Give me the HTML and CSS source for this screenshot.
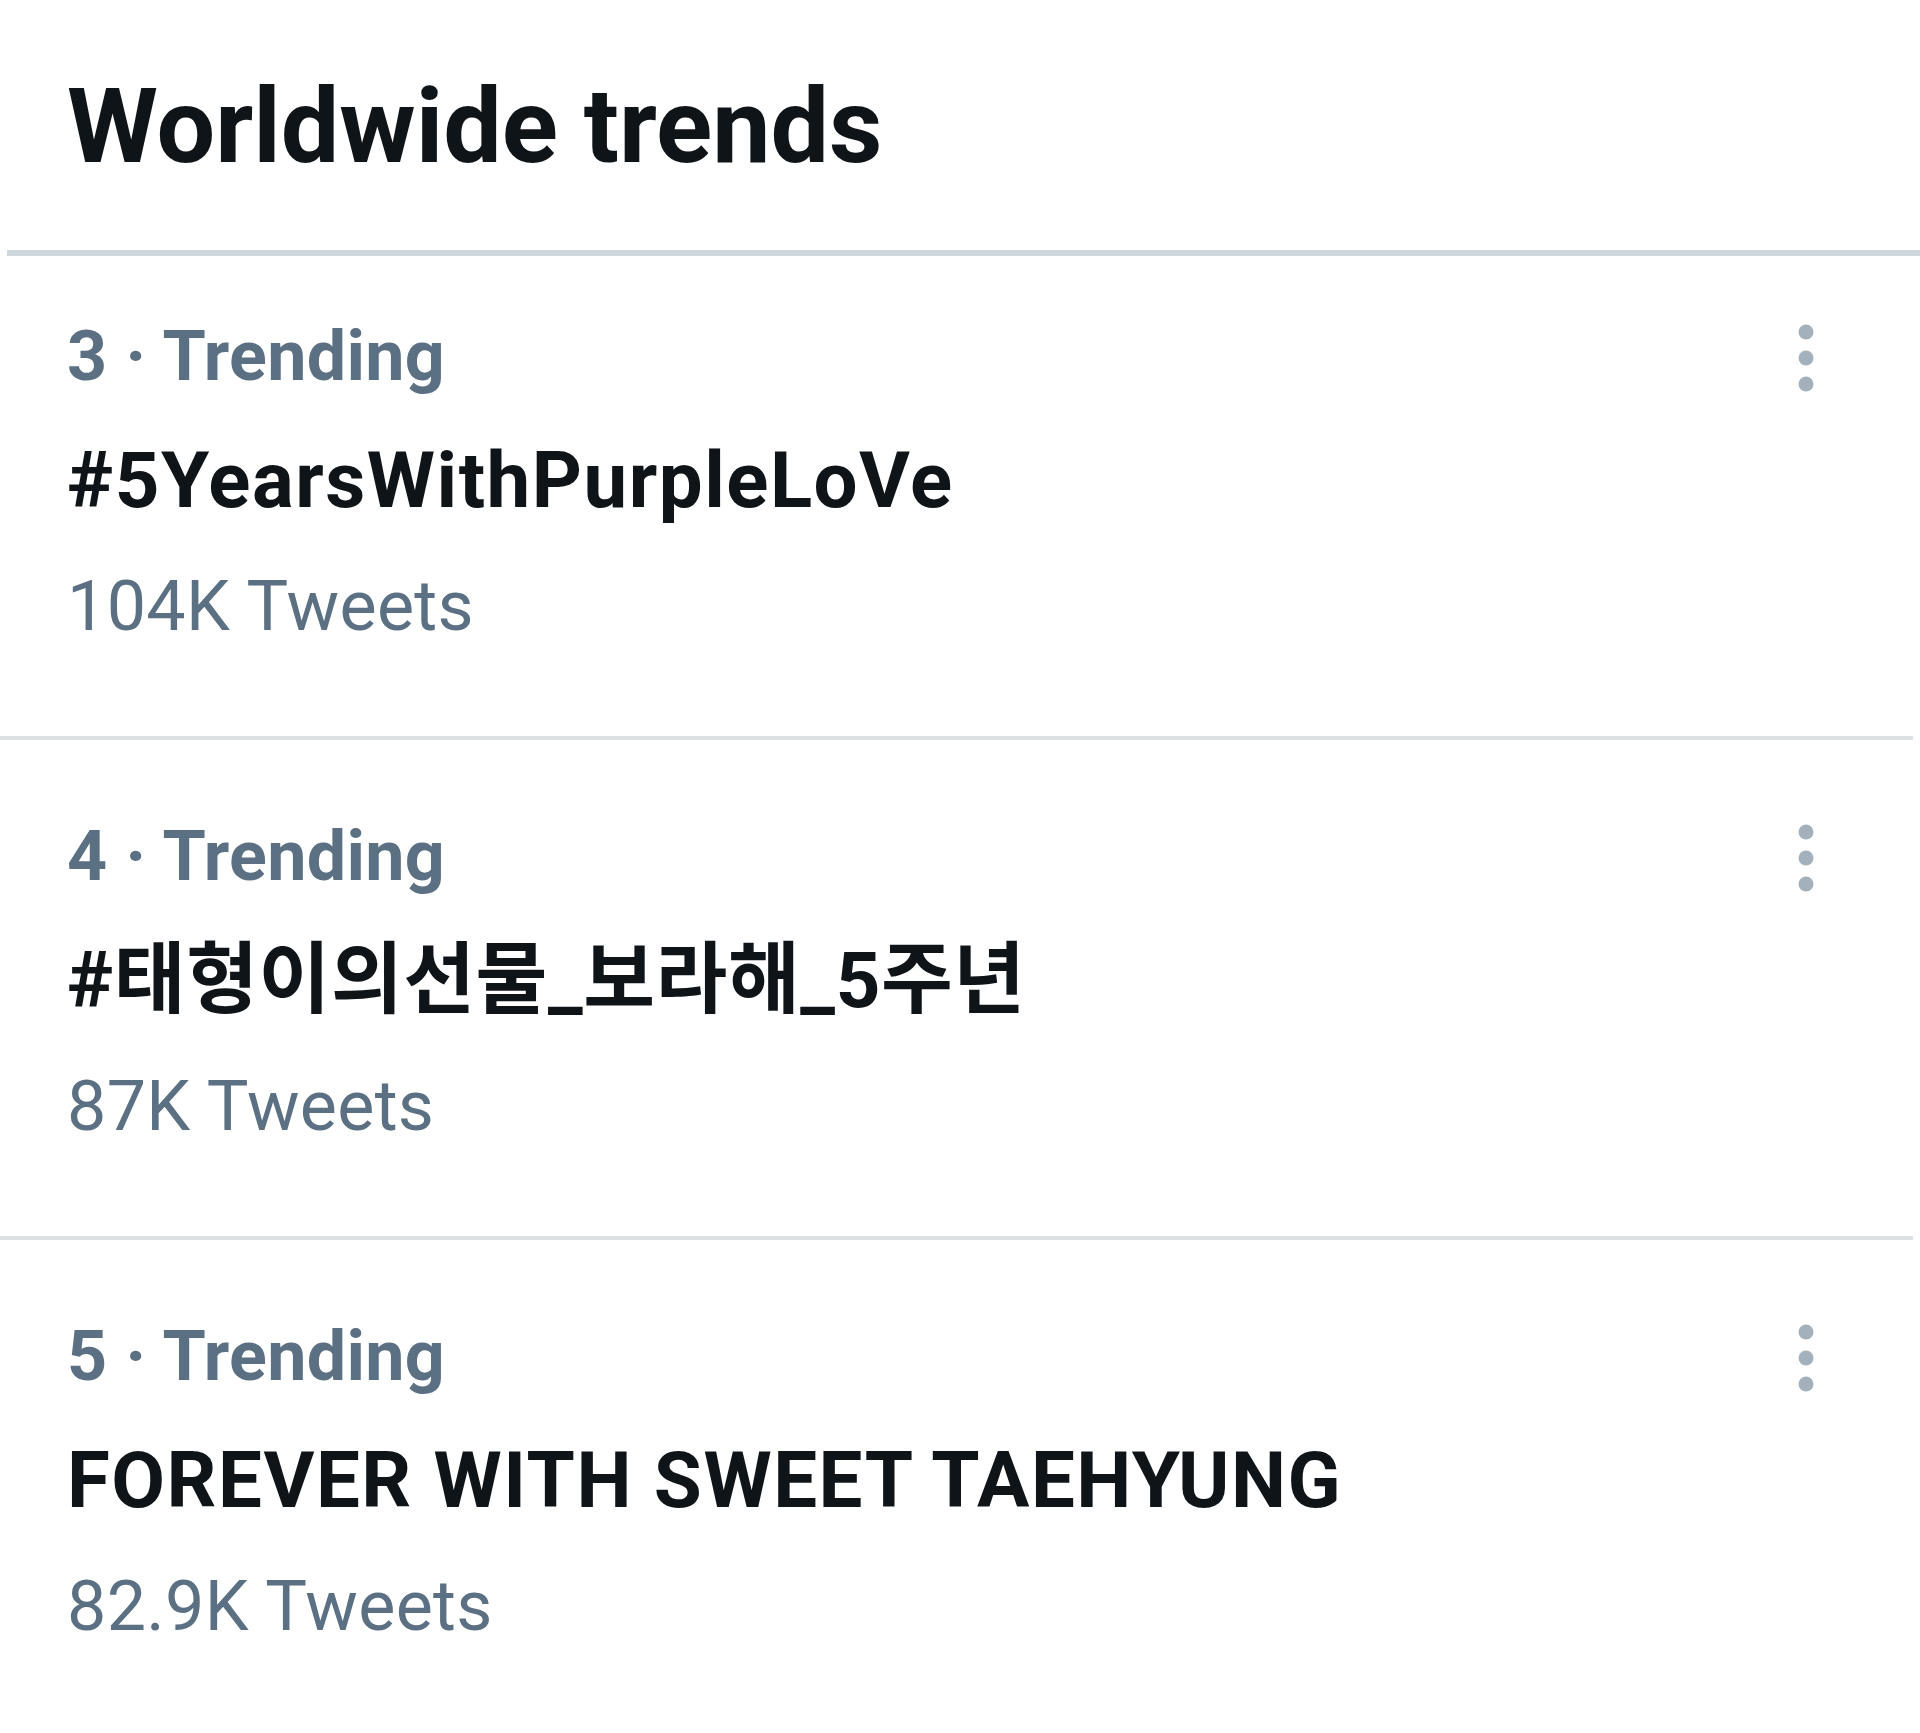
FILE: index.html
```html
<!DOCTYPE html>
<html lang="en">
<head>
<meta charset="utf-8">
<title>Worldwide trends</title>
<link rel="stylesheet" href="styles.css">
</head>
<body>
<div class="panel">
  <header class="header">
    <h1 class="title">Worldwide trends</h1>
  </header>
  <ul class="trends">
    <li class="trend trend--first">
      <div class="trend-body">
        <div class="trend-meta">3 · Trending</div>
        <div class="trend-name">#5YearsWithPurpleLoVe</div>
        <div class="trend-count">104K Tweets</div>
      </div>
      <svg class="more" viewBox="0 0 16 68" aria-hidden="true"><circle cx="8" cy="8" r="7.5"/><circle cx="8" cy="34" r="7.5"/><circle cx="8" cy="60" r="7.5"/></svg>
    </li>
    <li class="trend">
      <div class="trend-body">
        <div class="trend-meta">4 · Trending</div>
        <div class="trend-name trend-name--ko" lang="ko">#태형이의선물_보라해_5주년</div>
        <div class="trend-count">87K Tweets</div>
      </div>
      <svg class="more" viewBox="0 0 16 68" aria-hidden="true"><circle cx="8" cy="8" r="7.5"/><circle cx="8" cy="34" r="7.5"/><circle cx="8" cy="60" r="7.5"/></svg>
    </li>
    <li class="trend">
      <div class="trend-body">
        <div class="trend-meta">5 · Trending</div>
        <div class="trend-name">FOREVER WITH SWEET TAEHYUNG</div>
        <div class="trend-count">82.9K Tweets</div>
      </div>
      <svg class="more" viewBox="0 0 16 68" aria-hidden="true"><circle cx="8" cy="8" r="7.5"/><circle cx="8" cy="34" r="7.5"/><circle cx="8" cy="60" r="7.5"/></svg>
    </li>
  </ul>
</div>
</body>
</html>
```

FILE: styles.css
```css
html, body {
  margin: 0;
  padding: 0;
  background: #ffffff;
}

body {
  font-family: Roboto, "Noto Sans", "Noto Sans CJK KR", sans-serif;
  color: #0f1419;
}

.panel {
  width: 1920px;
}

.header {
  margin-left: 7px;
  padding: 75px 0 71px 60px;
  border-bottom: 6px solid #cfd7dc;
}

.title {
  margin: 0;
  font-size: 104px;
  line-height: 104px;
  font-weight: 700;
  color: #0f1419;
}

.trends {
  list-style: none;
  margin: 0;
  padding: 0;
}

.trend {
  display: flex;
  align-items: flex-start;
  margin-right: 7px;
  padding: 81px 99px 95px 67px;
  border-bottom: 4px solid #dbe1e5;
}

.trend--first {
  padding-top: 65px;
}

.trend-body {
  flex: 1;
  display: flex;
  flex-direction: column;
}

.trend-meta {
  font-size: 70px;
  line-height: 70px;
  font-weight: 700;
  letter-spacing: 0.3px;
  color: #5b7083;
}

.trend-name {
  margin-top: 51px;
  font-size: 78px;
  line-height: 78px;
  font-weight: 700;
  letter-spacing: 1.5px;
  color: #0f1419;
}

.trend-name--ko {
  font-family: Roboto, "Noto Sans CJK KR", sans-serif;
  letter-spacing: 0.6px;
}

.trend-count {
  margin-top: 51px;
  font-size: 70px;
  line-height: 70px;
  font-weight: 400;
  letter-spacing: 0.3px;
  color: #5b7083;
}

.more {
  width: 16px;
  height: 68px;
  margin-top: 3px;
  fill: #a3b1bd;
  flex: none;
}
```
